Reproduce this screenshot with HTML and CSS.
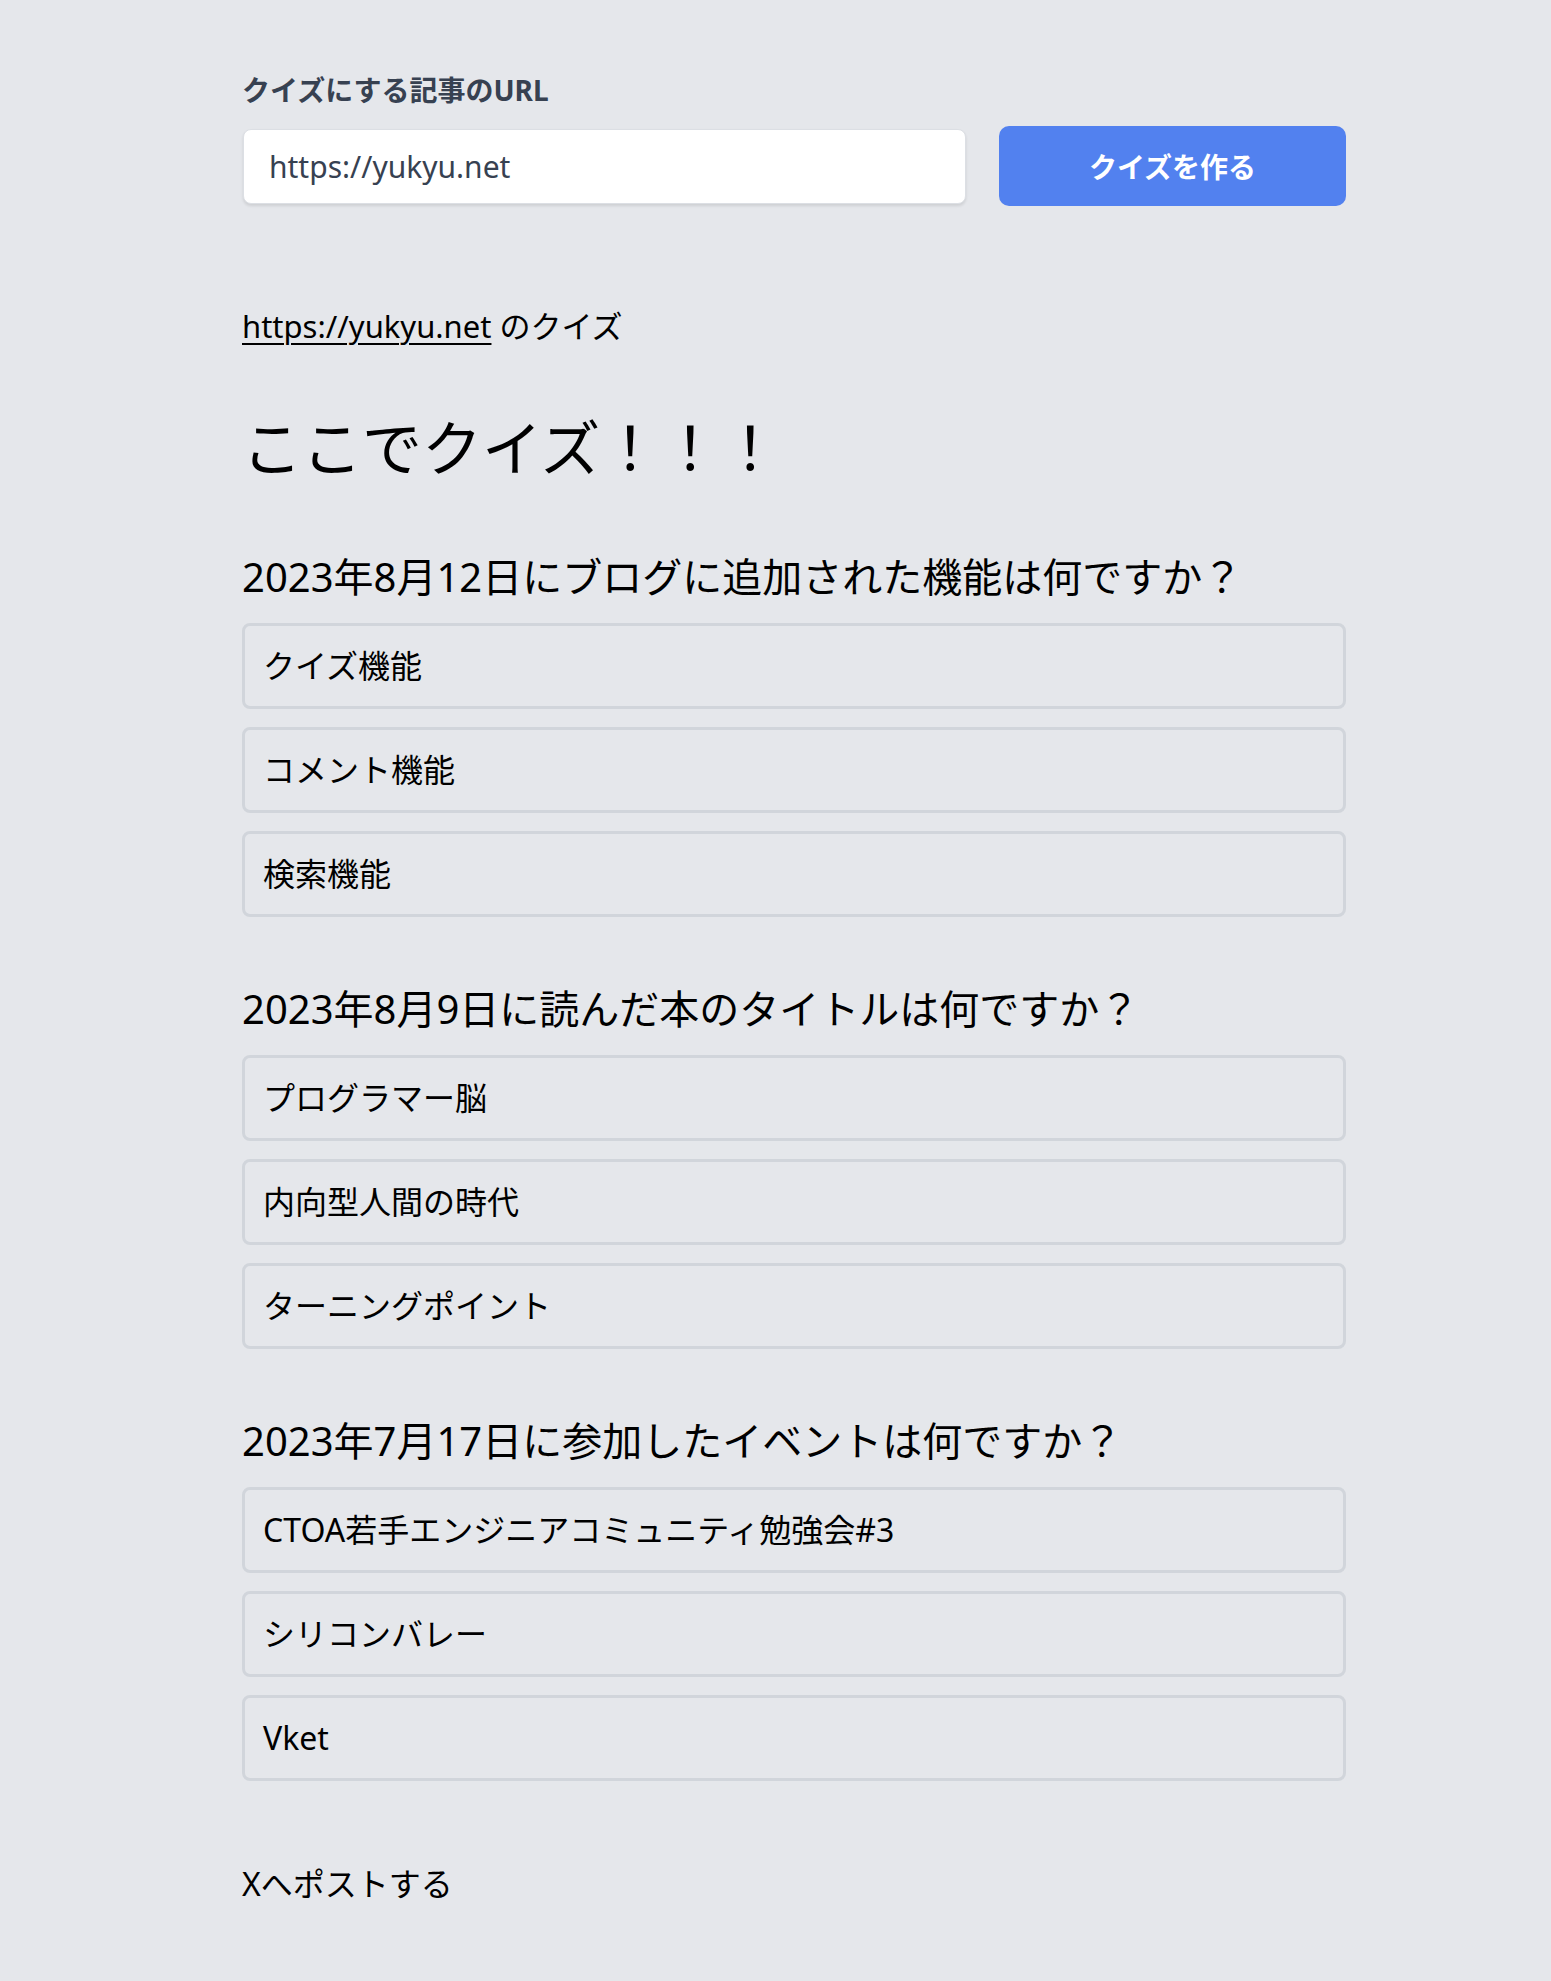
FILE: index.html
```html
<!DOCTYPE html>
<html lang="ja">
<head>
    <meta charset="UTF-8">
    <meta name="viewport" content="width=device-width, initial-scale=1.0">
    <title>記事からクイズ</title>
    <link rel="stylesheet" href="styles.css">
</head>
<body>
    <main class="page">
        <form class="url-form">
            <label class="url-label" for="article-url">クイズにする記事のURL</label>
            <div class="url-row">
                <input class="url-input" id="article-url" type="text" value="https://yukyu.net">
                <button class="make-button" type="button">クイズを作る</button>
            </div>
        </form>

        <p class="source"><a href="https://yukyu.net">https://yukyu.net</a> のクイズ</p>

        <h1 class="quiz-title">ここでクイズ！！！</h1>

        <section class="question">
            <h2>2023年8月12日にブログに追加された機能は何ですか？</h2>
            <div class="choices">
                <div class="choice">クイズ機能</div>
                <div class="choice">コメント機能</div>
                <div class="choice">検索機能</div>
            </div>
        </section>

        <section class="question">
            <h2>2023年8月9日に読んだ本のタイトルは何ですか？</h2>
            <div class="choices">
                <div class="choice">プログラマー脳</div>
                <div class="choice">内向型人間の時代</div>
                <div class="choice">ターニングポイント</div>
            </div>
        </section>

        <section class="question">
            <h2>2023年7月17日に参加したイベントは何ですか？</h2>
            <div class="choices">
                <div class="choice">CTOA若手エンジニアコミュニティ勉強会#3</div>
                <div class="choice">シリコンバレー</div>
                <div class="choice">Vket</div>
            </div>
        </section>

        <p class="share">Xへポストする</p>
    </main>
</body>
</html>
```

FILE: styles.css
```css
body {
    margin: 0;
    background-color: #e5e7eb;
    color: #000;
    font-family: "Noto Sans", "Noto Sans CJK JP", sans-serif;
}

.page {
    width: 1104px;
    margin-left: 242px;
    padding-top: 72px;
    padding-bottom: 60px;
}

/* url form */
.url-label {
    display: block;
    font-size: 28px;
    line-height: 36px;
    font-weight: 700;
    color: #374151;
    margin-bottom: 18px;
}

.url-row {
    display: flex;
    align-items: center;
    gap: 33px;
    height: 80px;
}

.url-input {
    flex: 1;
    height: 75px;
    box-sizing: border-box;
    margin-left: 1px;
    padding: 0 25px;
    border: 1px solid #dcdfe4;
    border-radius: 8px;
    background-color: #fff;
    box-shadow: 0 2px 3px rgba(0, 0, 0, 0.1);
    font-family: inherit;
    font-size: 30px;
    color: #374151;
}

.make-button {
    width: 347px;
    height: 80px;
    border: none;
    border-radius: 10px;
    background-color: #5281ef;
    color: #fff;
    font-family: inherit;
    font-size: 28px;
    font-weight: 700;
    cursor: pointer;
}

/* quiz */
.source {
    margin: 100px 0 0;
    font-size: 31px;
    line-height: 40px;
}

.source a {
    color: #000;
    text-decoration-thickness: 2px;
    text-underline-offset: 5px;
}

.quiz-title {
    margin: 67px 0 0;
    font-size: 60px;
    line-height: 70px;
    font-weight: 400;
}

.question {
    margin-top: 68px;
}

.quiz-title + .question {
    margin-top: 70px;
}

.question h2 {
    margin: 0 0 22px;
    font-size: 40px;
    line-height: 48px;
    font-weight: 400;
}

.choices {
    display: flex;
    flex-direction: column;
    gap: 18px;
}

.choice {
    border: 3px solid #d1d5db;
    border-radius: 8px;
    padding: 20px 18px;
    font-size: 32px;
    line-height: 40px;
    cursor: pointer;
}

.share {
    margin: 83px 0 0;
    font-size: 32px;
    line-height: 40px;
}
```
